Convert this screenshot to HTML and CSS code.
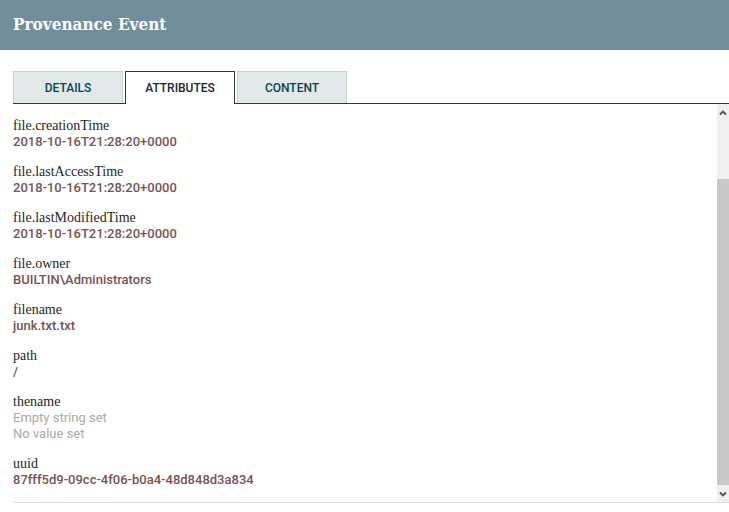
FILE: index.html
```html
<!DOCTYPE html>
<html lang="en">
<head>
  <meta charset="UTF-8" />
  <title>Provenance Event</title>
  <link rel="stylesheet" href="styles.css">
</head>
<body>
  <div class="dialog-header">
    <span class="dialog-title">Provenance Event</span>
  </div>

  <div class="tabs">
    <div class="tab">DETAILS</div>
    <div class="tab selected">ATTRIBUTES</div>
    <div class="tab">CONTENT</div>
  </div>

  <div class="tab-body">
    <div class="attributes">
      <div class="attr">
        <div class="attr-name">file.creationTime</div>
        <div class="attr-value">2018-10-16T21:28:20+0000</div>
      </div>
      <div class="attr">
        <div class="attr-name">file.lastAccessTime</div>
        <div class="attr-value">2018-10-16T21:28:20+0000</div>
      </div>
      <div class="attr">
        <div class="attr-name">file.lastModifiedTime</div>
        <div class="attr-value">2018-10-16T21:28:20+0000</div>
      </div>
      <div class="attr">
        <div class="attr-name">file.owner</div>
        <div class="attr-value">BUILTIN\Administrators</div>
      </div>
      <div class="attr">
        <div class="attr-name">filename</div>
        <div class="attr-value">junk.txt.txt</div>
      </div>
      <div class="attr">
        <div class="attr-name">path</div>
        <div class="attr-value">/</div>
      </div>
      <div class="attr">
        <div class="attr-name">thename</div>
        <div class="attr-value unset">Empty string set</div>
        <div class="attr-value unset">No value set</div>
      </div>
      <div class="attr">
        <div class="attr-name">uuid</div>
        <div class="attr-value">87fff5d9-09cc-4f06-b0a4-48d848d3a834</div>
      </div>
    </div>

    <div class="scrollbar">
      <div class="scroll-btn">
        <svg width="12" height="12" viewBox="0 0 12 12"><path d="M3 7.5 L6 4.5 L9 7.5" fill="none" stroke="#505050" stroke-width="1.8"/></svg>
      </div>
      <div class="scroll-track">
        <div class="scroll-thumb"></div>
      </div>
      <div class="scroll-btn">
        <svg width="12" height="12" viewBox="0 0 12 12"><path d="M3 4.5 L6 7.5 L9 4.5" fill="none" stroke="#505050" stroke-width="1.8"/></svg>
      </div>
    </div>
  </div>
</body>
</html>
```

FILE: styles.css
```css
body {
  margin: 0;
  font-family: Roboto, "Liberation Sans", sans-serif;
  background: #fff;
  color: #262626;
}

.dialog-header {
  height: 50px;
  background: #728e9b;
  padding-left: 13px;
  line-height: 48px;
}

.dialog-title {
  font-family: "DejaVu Serif", serif;
  font-stretch: condensed;
  font-weight: bold;
  font-size: 17px;
  color: #fff;
}

.tabs {
  display: flex;
  gap: 2px;
  margin: 21px 0 0 13px;
  border-bottom: 1px solid #263d42;
}

.tab {
  width: 108px;
  height: 31px;
  line-height: 33px;
  text-align: center;
  font-size: 12px;
  font-weight: 500;
  color: #004849;
  background: #e3e8eb;
  border: 1px solid #c7d2d7;
  border-bottom: none;
}

.tab.selected {
  background: #fff;
  color: #262626;
  border-color: #263d42;
  height: 32px;
  margin-bottom: -1px;
}

.tab-body {
  display: flex;
  height: 398px;
  margin-left: 13px;
  border-bottom: 1px solid #dddddd;
}

.attributes {
  flex: 1;
  padding-top: 13px;
}

.attr {
  margin-bottom: 13px;
}

.attr-name {
  font-family: "Liberation Serif", serif;
  font-size: 14px;
  line-height: 17px;
  color: #262626;
}

.attr-value {
  font-size: 13px;
  font-weight: 500;
  line-height: 16px;
  color: #775351;
}

.attr-value.unset {
  font-weight: normal;
  color: #aaaaaa;
}

.scrollbar {
  width: 12px;
  display: flex;
  flex-direction: column;
  background: #f0f0f0;
}

.scroll-btn {
  height: 17px;
  display: flex;
  align-items: center;
  justify-content: center;
}

.scroll-track {
  flex: 1;
  display: flex;
  flex-direction: column;
  justify-content: flex-end;
}

.scroll-thumb {
  height: 306px;
  background: #c8c8c8;
}
```
